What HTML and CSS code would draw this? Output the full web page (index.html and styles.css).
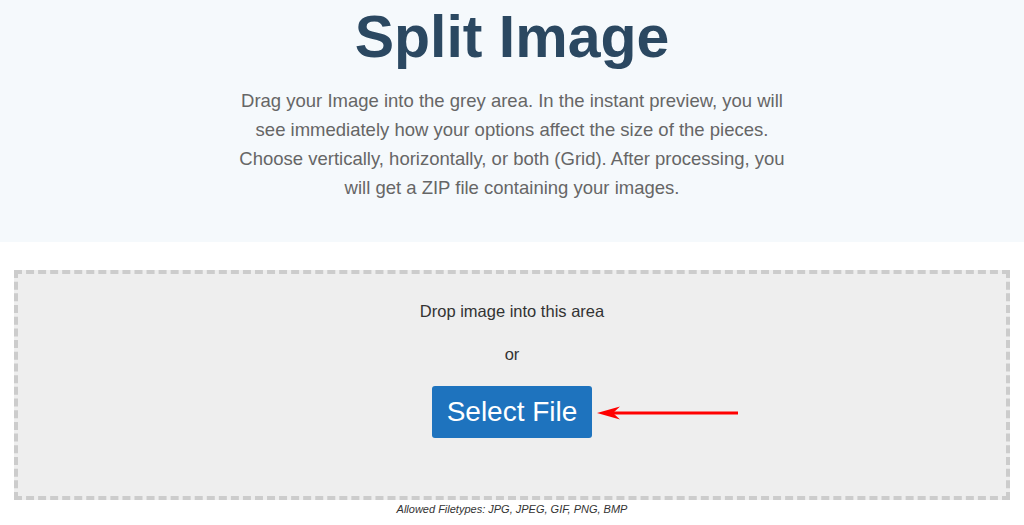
FILE: index.html
```html
<!DOCTYPE html>
<html lang="en">
<head>
<meta charset="utf-8">
<title>Split Image</title>
<link rel="stylesheet" href="styles.css">
</head>
<body>
<header class="hero">
  <h1 class="title">Split Image</h1>
  <p class="intro">Drag your Image into the grey area. In the instant preview, you will see immediately how your options affect the size of the pieces. Choose vertically, horizontally, or both (Grid). After processing, you will get a ZIP file containing your images.</p>
</header>
<main class="main">
  <section class="dropzone">
    <p class="drop-text">Drop image into this area</p>
    <p class="or-text">or</p>
    <div class="button-row">
      <button class="select-btn" type="button">Select File</button>
      <svg class="arrow" width="142" height="16" viewBox="0 0 142 16" aria-hidden="true">
        <path d="M8 8 H142" stroke="#f00" stroke-width="3" fill="none"/>
        <path d="M1 8 L24 1.5 L17 8 L24 14.5 Z" fill="#f00"/>
      </svg>
    </div>
  </section>
  <p class="filetypes">Allowed Filetypes: JPG, JPEG, GIF, PNG, BMP</p>
</main>
</body>
</html>
```
FILE: styles.css
```css
html, body {
  margin: 0;
  padding: 0;
  background: #ffffff;
  font-family: "Liberation Sans", Arial, sans-serif;
}

.hero {
  background: #f5f9fc;
  height: 242px;
  box-sizing: border-box;
  padding-top: 1px;
  text-align: center;
}

.title {
  margin: 0;
  margin-top: 2px;
  font-size: 59px;
  line-height: 68px;
  font-weight: bold;
  color: #2b4861;
}

.intro {
  margin: 15px auto 0;
  width: 552px;
  font-size: 18.5px;
  line-height: 29px;
  color: #666666;
}

.main {
  padding: 28px 14px 0;
}

.dropzone {
  height: 230px;
  box-sizing: border-box;
  border: 4px dashed #cccccc;
  background: #eeeeee;
  text-align: center;
  padding-top: 27px;
}

.drop-text {
  margin: 0;
  font-size: 16.5px;
  line-height: 20px;
  color: #333333;
}

.or-text {
  margin: 23px 0 0;
  font-size: 16.5px;
  line-height: 20px;
  color: #333333;
}

.button-row {
  position: relative;
  margin: 22px auto 0;
  width: 160px;
}

.select-btn {
  display: block;
  width: 160px;
  height: 52px;
  border: none;
  border-radius: 3px;
  background: #1e73be;
  color: #ffffff;
  font-family: "Liberation Sans", Arial, sans-serif;
  font-size: 28px;
  padding: 0;
  cursor: pointer;
}

.arrow {
  position: absolute;
  left: 164px;
  top: 19px;
}

.filetypes {
  margin: 3px 0 0;
  text-align: center;
  font-size: 11px;
  font-style: italic;
  color: #333333;
}
```
